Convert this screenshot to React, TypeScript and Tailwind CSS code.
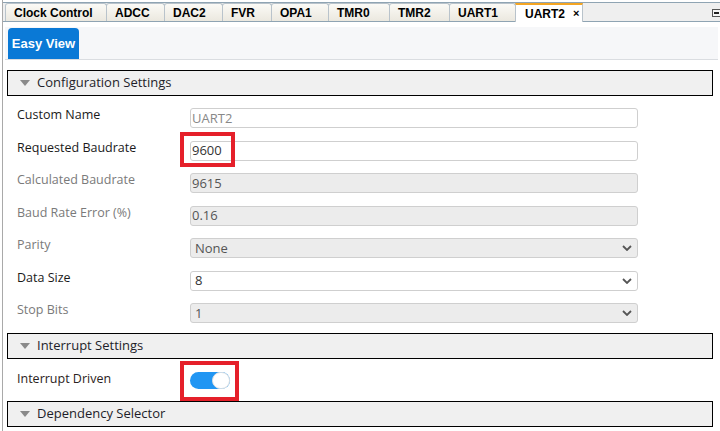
import React from "react";

const tabs: [string, number][] = [
  ["Clock Control", 102],
  ["ADCC", 59],
  ["DAC2", 59],
  ["FVR", 50],
  ["OPA1", 58],
  ["TMR0", 62],
  ["TMR2", 61],
  ["UART1", 67],
];

function Chevron() {
  return (
    <svg width="10" height="6" viewBox="0 0 10 6" className="shrink-0">
      <polyline points="1,1 5,5 9,1" fill="none" stroke="#555" strokeWidth="1.8" />
    </svg>
  );
}

function SectionHeader({ title }: { title: string }) {
  return (
    <div className="ml-[7px] w-[706px] h-[26px] border border-black bg-[#f0f0f0] flex items-center">
      <svg width="10" height="6" viewBox="0 0 10 6" className="ml-[12px] mr-[7px]">
        <polygon points="0,0 10,0 5,6" fill="#8a8a8a" />
      </svg>
      <span className="text-[13px] text-[#1e1e2a]">{title}</span>
    </div>
  );
}

type Row = {
  label: string;
  value: string;
  enabled: boolean;
  select?: boolean;
  mark?: boolean;
};

const rows: Row[] = [
  { label: "Custom Name", value: "UART2", enabled: true },
  { label: "Requested Baudrate", value: "9600", enabled: true, mark: true },
  { label: "Calculated Baudrate", value: "9615", enabled: false },
  { label: "Baud Rate Error (%)", value: "0.16", enabled: false },
  { label: "Parity", value: "None", enabled: false, select: true },
  { label: "Data Size", value: "8", enabled: true, select: true },
  { label: "Stop Bits", value: "1", enabled: false, select: true },
];

function Field({ row }: { row: Row }) {
  return (
    <div className="h-[32.5px] flex items-center">
      <div
        className={`w-[190px] pl-[17px] mb-[5px] text-[12.5px] ${row.enabled ? "text-[#1a1a1a]" : "text-[#7a7a7a]"}`}
      >
        {row.label}
      </div>
      <div className="relative">
        <div
          className={`w-[448px] h-[20px] rounded-[3px] border border-[#cfcfcf] flex items-center justify-between text-[13px] ${
            row.enabled ? "bg-white" : "bg-[#ececec]"
          } ${row.select ? "pl-[4px] pr-[5px]" : "pl-[1px]"}`}
        >
          <span
            className={
              row.label === "Custom Name"
                ? "text-[#888]"
                : row.enabled
                ? "text-[#333]"
                : "text-[#555]"
            }
          >
            {row.value}
          </span>
          {row.select && <Chevron />}
        </div>
        {row.mark && (
          <div className="absolute left-[-10px] top-[-9px] w-[55px] h-[35px] border-[4px] border-[#e5202a]" />
        )}
      </div>
    </div>
  );
}

export default function App() {
  return (
    <div
      className="w-[720px] h-[431px] overflow-hidden bg-white flex"
      style={{ fontFamily: '"Open Sans", "Noto Sans", sans-serif' }}
    >
      <div className="w-[2px]" />
      <div className="w-[1px] bg-[#a9a9a9]" />
      <div className="flex-1 flex flex-col">
        {/* top tab bar */}
        <div className="mt-[2px] h-[20px] border-y border-[#8fa4b3] bg-[#efefef] flex items-end pl-[2px] relative">
          {tabs.map(([t, w]) => (
            <div
              key={t}
              style={{ width: w, fontFamily: '"Liberation Sans", Arial, sans-serif' }}
              className="h-[18px] pl-[8px] flex items-center border border-b-0 border-[#b9c3cb] rounded-t-[3px] bg-gradient-to-b from-[#fbfaf6] to-[#ebe8df] text-[12px] font-bold text-black mr-[-1px]"
            >
              {t}
            </div>
          ))}
          <div
            className="w-[68px] h-[19px] pl-[9px] flex items-center gap-[8px] border border-b-0 border-[#b9c3cb] border-t-2 border-t-[#f4a523] bg-white text-[12px] font-bold text-black mb-[-1px]"
            style={{ fontFamily: '"Liberation Sans", Arial, sans-serif' }}
          >
            UART2
            <span className="text-[11px] leading-none">×</span>
          </div>
          <div className="absolute right-[-1px] top-[6px] w-[9px] h-[8px] border border-[#555] bg-[#f6f6f6] flex items-center justify-center">
            <div className="w-[5px] h-[2px] bg-[#222]" />
          </div>
        </div>

        {/* easy view strip */}
        <div className="mt-[5px] ml-[2px] w-[713px] h-[33px] bg-[#f6f7f9] border-b border-[#dadde1] flex items-end pl-[3px]">
          <div
            className="w-[71px] h-[31px] rounded-t-[4px] bg-[#0a79d6] text-white font-bold text-[13px] flex items-center justify-center"
            style={{ fontFamily: '"Liberation Sans", Arial, sans-serif' }}
          >
            Easy View
          </div>
        </div>

        <div className="mt-[10px] -ml-[3px]">
          <SectionHeader title="Configuration Settings" />
          <div className="pt-[6px]">
            {rows.map((r) => (
              <Field key={r.label} row={r} />
            ))}
          </div>
          <div className="mt-[3.5px]">
            <SectionHeader title="Interrupt Settings" />
          </div>
          <div className="h-[42px] flex items-center">
            <div className="w-[190px] pl-[17px] mb-[2px] text-[12.5px] text-[#2b2222]">Interrupt Driven</div>
            <div className="relative">
              <div className="w-[40px] h-[17px] rounded-full bg-[#2196f3] flex items-center justify-end">
                <div className="w-[18px] h-[17px] rounded-full bg-white border border-[#e2e2e2]" />
              </div>
              <div className="absolute left-[-10px] top-[-11px] w-[59px] h-[40px] border-[4px] border-[#e5202a]" />
            </div>
          </div>
          <SectionHeader title="Dependency Selector" />
        </div>
      </div>
    </div>
  );
}
